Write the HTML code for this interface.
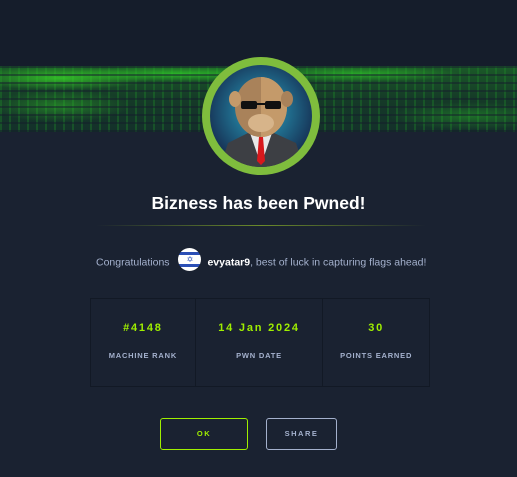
<!DOCTYPE html>
<html><head><style>
body{margin:0;width:517px;height:477px;background:#1a2231;font-family:"Liberation Sans",sans-serif;position:relative;overflow:hidden}
.top{position:absolute;left:0;top:0;width:517px;height:132px;background:#151d2b}
.band{position:absolute;left:0;top:66px;width:517px;height:66px;
background:
radial-gradient(ellipse 90px 12px at 60px 12px,rgba(60,230,40,.7),transparent),
radial-gradient(ellipse 120px 8px at 180px 8px,rgba(50,220,40,.7),transparent),
radial-gradient(ellipse 70px 16px at 60px 40px,rgba(50,200,40,.45),transparent),
radial-gradient(ellipse 100px 8px at 360px 8px,rgba(50,220,40,.6),transparent),
radial-gradient(ellipse 80px 14px at 470px 50px,rgba(40,180,40,.45),transparent),
repeating-linear-gradient(90deg,rgba(30,140,40,.35) 0 2px,transparent 2px 9px),
linear-gradient(#1b5a28,#153a28 50%,#14302a);}
.band:after{content:"";position:absolute;inset:0;background:repeating-linear-gradient(0deg,rgba(21,29,43,.5) 0 2px,transparent 2px 8px)}
.av{position:absolute;left:202px;top:57px;width:118px;height:118px;border-radius:50%;background:#7fbd3d;}
.av .in{position:absolute;left:8px;top:8px;width:102px;height:102px;border-radius:50%;background:radial-gradient(circle at 50% 45%,#2aa7c4,#17375a 70%);overflow:hidden}
h1{position:absolute;top:193px;left:0;width:517px;text-align:center;margin:0;color:#fff;font-size:17.5px;font-weight:bold}
.line{position:absolute;left:96px;top:225px;width:330px;height:1px;background:linear-gradient(90deg,transparent,#6b8a2a,transparent)}
.cg{position:absolute;top:254px;left:96px;font-size:10.5px;color:#a4b1cd;white-space:nowrap}
.flag{display:inline-block;width:23px;height:23px;border-radius:50%;background:linear-gradient(#fff 0 4px,#2b4fb6 4px 7px,#fff 7px 16px,#2b4fb6 16px 19px,#fff 19px);vertical-align:middle;margin:-6px 6px 0 6px;color:#2b4fb6;font-size:8px;text-align:center;line-height:23px}
.cg b{color:#fff}
.stats{position:absolute;left:90px;top:298px;width:340px;height:89px;border:1px solid #121925;box-sizing:border-box;display:flex}
.s{border-right:1px solid #121925;text-align:center}
.s:last-child{border:none}
.v{color:#9fef00;font-weight:bold;font-size:11px;letter-spacing:1.8px;margin-top:23px}
.l{color:#a4b1cd;font-size:7.5px;font-weight:bold;letter-spacing:.8px;margin-top:17px}
.btn{position:absolute;top:418px;height:32px;box-sizing:border-box;border-radius:3px;font-size:7.5px;font-weight:bold;letter-spacing:1.5px;text-align:center;line-height:30px}
</style></head><body>
<div class="top"></div>
<div class="band"></div>
<div class="av"><div class="in">
<svg width="102" height="102" viewBox="0 0 102 102">
<path d="M10 102 L18 78 L38 68 L64 68 L86 78 L94 102Z" fill="#3d3f44"/>
<path d="M40 68 L51 100 L62 68Z" fill="#e8e8e8"/>
<path d="M49 72 L53 72 L55 96 L51 100 L47 96Z" fill="#d8181c"/>
<ellipse cx="51" cy="42" rx="26" ry="30" fill="#a9825a"/>
<path d="M51 12 A26 30 0 0 1 51 72Z" fill="#c49a6a"/>
<ellipse cx="25" cy="34" rx="6" ry="8" fill="#c49a6a"/>
<ellipse cx="77" cy="34" rx="6" ry="8" fill="#a9825a"/>
<rect x="31" y="36" width="16" height="8" rx="2" fill="#111"/>
<rect x="55" y="36" width="16" height="8" rx="2" fill="#111"/>
<rect x="46" y="38" width="10" height="2" fill="#111"/>
<ellipse cx="51" cy="58" rx="13" ry="9" fill="#d7b48a"/>
</svg></div></div>
<h1>Bizness has been Pwned!</h1>
<div class="line"></div>
<div class="cg">Congratulations <span class="flag">✡</span><b>evyatar9</b>, best of luck in capturing flags ahead!</div>
<div class="stats">
<div class="s" style="width:105px"><div class="v">#4148</div><div class="l">MACHINE RANK</div></div>
<div class="s" style="width:128px"><div class="v">14 Jan 2024</div><div class="l">PWN DATE</div></div>
<div class="s" style="width:107px"><div class="v">30</div><div class="l">POINTS EARNED</div></div>
</div>
<div class="btn" style="left:160px;width:88px;border:1px solid #9fef00;color:#9fef00">OK</div>
<div class="btn" style="left:266px;width:71px;border:1px solid #a4b1cd;color:#a4b1cd">SHARE</div>
</body></html>
